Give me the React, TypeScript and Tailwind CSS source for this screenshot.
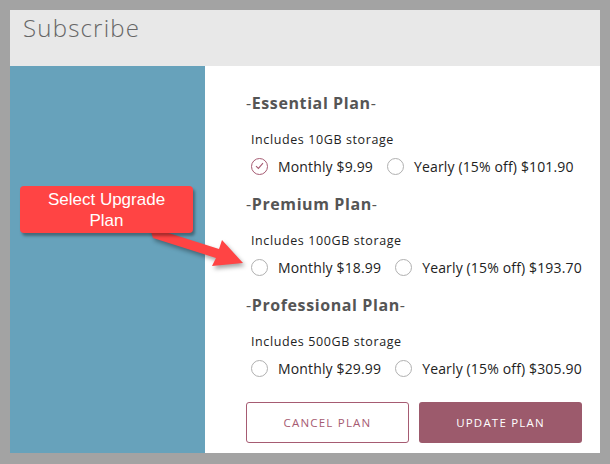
import React from 'react';

type Plan = {
  name: string;
  storage: string;
  monthly: string;
  yearly: string;
  checked?: boolean;
};

const plans: Plan[] = [
  { name: 'Essential Plan', storage: 'Includes 10GB storage', monthly: 'Monthly $9.99', yearly: 'Yearly (15% off) $101.90', checked: true },
  { name: 'Premium Plan', storage: 'Includes 100GB storage', monthly: 'Monthly $18.99', yearly: 'Yearly (15% off) $193.70' },
  { name: 'Professional Plan', storage: 'Includes 500GB storage', monthly: 'Monthly $29.99', yearly: 'Yearly (15% off) $305.90' },
];

function Radio({ checked }: { checked?: boolean }) {
  if (checked) {
    return (
      <span className="flex h-[17px] w-[17px] shrink-0 items-center justify-center rounded-full border border-[#a65b72]">
        <svg width="9" height="8" viewBox="0 0 9 8" fill="none">
          <path d="M1 4.2 L3.4 6.4 L8 1.2" stroke="#a65b72" strokeWidth="1.1" />
        </svg>
      </span>
    );
  }
  return <span className="block h-[17px] w-[17px] shrink-0 rounded-full border border-[#b0b0b0]" />;
}

function PlanBlock({ plan }: { plan: Plan }) {
  return (
    <div className="pb-[18px]">
      <div className="h-5 text-[16px] leading-5 tracking-[0.6px] text-[#555]">
        -<span className="font-bold">{plan.name}</span>-
      </div>
      <div className="mt-[18px] h-[18px] pl-[5px] text-[12.5px] leading-[18px] tracking-[0.6px] text-[#222]">{plan.storage}</div>
      <div className="mt-[7px] flex h-5 items-center whitespace-nowrap pl-[5px] text-[14px] tracking-[0.15px] text-[#222]">
        <Radio checked={plan.checked} />
        <span className="ml-[10px]">{plan.monthly}</span>
        <span className="ml-[14px] flex"><Radio /></span>
        <span className="ml-[10px]">{plan.yearly}</span>
      </div>
    </div>
  );
}

export default function App() {
  return (
    <div className="relative h-[464px] w-[610px] bg-[#a3a3a3] pl-[10px] pr-[10px] pt-[10px]" style={{ fontFamily: '"Open Sans", "Liberation Sans", sans-serif' }}>
      <div className="flex h-[443px] flex-col">
        <div className="h-[56px] bg-[#e8e8e8] pl-[13px] pt-0 text-[24px] font-light tracking-[1.2px] text-[#666]">Subscribe</div>
        <div className="flex flex-1">
          <div className="w-[195px] bg-[#67a2bb]" />
          <div className="flex-1 bg-white pl-[41px] pt-[27px]">
            {plans.map((p) => (
              <PlanBlock key={p.name} plan={p} />
            ))}
            <div className="mt-[6px] flex gap-[10px]">
              <button className="h-[41px] w-[163px] rounded-[3px] border border-[#a65b72] bg-white text-[11.5px] tracking-[1.2px] text-[#a65b72]">
                CANCEL PLAN
              </button>
              <button className="h-[41px] w-[163px] rounded-[3px] bg-[#9c5a6c] text-[11.5px] tracking-[1.2px] text-white">
                UPDATE PLAN
              </button>
            </div>
          </div>
        </div>
      </div>

      {/* callout */}
      <svg className="absolute left-0 top-0" width="610" height="464" style={{ filter: 'drop-shadow(2px 3px 2px rgba(0,0,0,0.35))' }}>
        <polygon points="150,229 153,238 216,258 212,266 243,263 222,240 219,249 156,229" fill="#ff4444" />
      </svg>
      <div
        className="absolute left-[20px] top-[186px] flex h-[47px] w-[173px] flex-col items-center justify-center rounded-[4px] bg-[#ff4444] text-[17px] leading-[21px] text-white shadow-[2px_3px_3px_rgba(0,0,0,0.35)]"
        style={{ fontFamily: '"Liberation Sans", Arial, sans-serif' }}
      >
        <span>Select Upgrade</span>
        <span>Plan</span>
      </div>
    </div>
  );
}
